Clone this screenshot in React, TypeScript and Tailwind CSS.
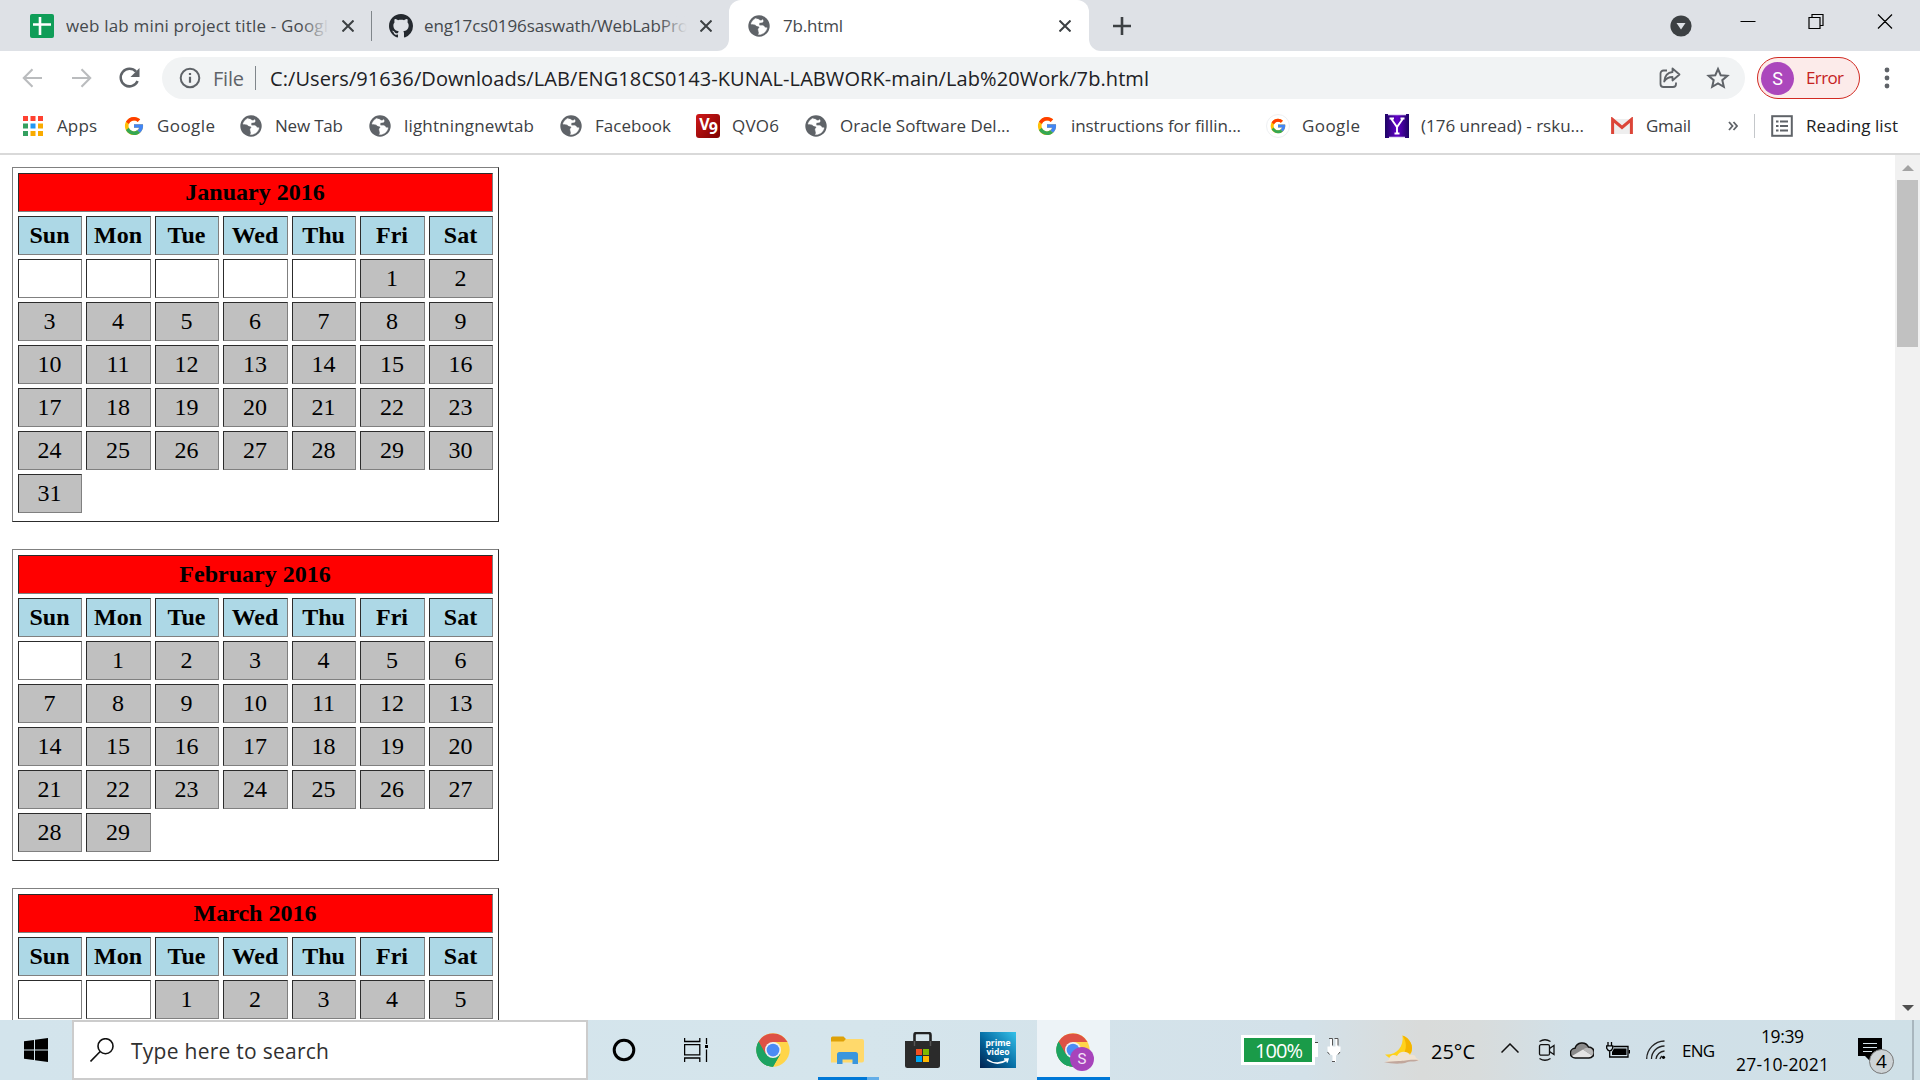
import { useLayoutEffect, useRef, type ReactNode } from "react";

const UI = "font-['Open_Sans','Noto_Sans',sans-serif]";

/** Single line of text whose tracking is adjusted to fill the width of its box. */
function Fit({ className = "", children }: { className?: string; children: string }) {
  const box = useRef<HTMLDivElement>(null);
  const run = useRef<HTMLSpanElement>(null);
  useLayoutEffect(() => {
    const b = box.current;
    const r = run.current;
    if (!b || !r) return;
    r.style.letterSpacing = "0px";
    const natural = r.getBoundingClientRect().width;
    const gap = (b.clientWidth - natural) / Math.max(1, children.length - 1);
    r.style.letterSpacing = `${gap}px`;
  }, [children]);
  return (
    <div ref={box} className={`shrink-0 whitespace-nowrap ${className}`}>
      <span ref={run} className="inline-block">{children}</span>
    </div>
  );
}

function Globe({ className = "" }: { className?: string }) {
  return (
    <svg viewBox="0 0 22 22" className={`h-[22px] w-[22px] shrink-0 ${className}`}>
      <circle cx="11" cy="11" r="10.7" fill="#5f6368" />
      <path
        d="M8.2 3.2C5.6 4.2 3.7 6.3 3 9.1c1.700.2 3.600.5 4.600.8.6.2.5.9 1.200 1.200.9.4 2.300.1 2.500 1.200.1.8-.9 1-1.100 1.800-.2 1.100.6 2.200.7 3.300.1.900-.2 1.600-.6 2.200 4.300.3 8-2.700 8.800-6.800-1.100.1-1.800-.1-2.500-.8-.6-.600-.900-1.300-1.800-1.500-1.200-.3-2.700.3-3.500-.6-.6-.700-.2-1.700.5-2.100 1-.6 2.300 0 3.100-.9.600-.7.2-1.700-.2-2.400-.5.700-1.200 1.100-2.100 1-1-.1-1.400-.8-2.200-1.200-.7-.3-1.600-.3-2.200-.100z"
        fill="#fff"
        stroke="#fff"
        strokeWidth=".4"
      />
    </svg>
  );
}

function GoogleG({ className = "" }: { className?: string }) {
  return (
    <svg viewBox="2 2 44 44" className={`shrink-0 ${className}`}>
      <path fill="#FFC107" d="M43.6 20H42V20H24v8h11.300c-1.650 4.650-6.080 8-11.300 8-6.630 0-12-5.370-12-12s5.370-12 12-12c3.060 0 5.840 1.150 7.960 3.040l5.660-5.660C34.050 6.050 29.270 4 24 4 12.950 4 4 12.950 4 24s8.950 20 20 20 20-8.950 20-20c0-1.340-.14-2.650-.39-4z" />
      <path fill="#FF3D00" d="M6.300 14.700l6.570 4.820C14.650 15.100 18.960 12 24 12c3.060 0 5.840 1.150 7.960 3.040l5.660-5.660C34.050 6.050 29.270 4 24 4 16.320 4 9.660 8.340 6.300 14.700z" />
      <path fill="#34A853" d="M24 44c5.170 0 9.860-1.980 13.400-5.200l-6.190-5.240C29.200 35.100 26.700 36 24 36c-5.200 0-9.620-3.320-11.280-7.950l-6.520 5.020C9.500 39.560 16.230 44 24 44z" />
      <path fill="#4285F4" d="M43.600 20H24v8h11.300a12 12 0 0 1-4.090 5.570l6.190 5.240C36.970 39.200 44 34 44 24c0-1.340-.14-2.650-.4-4z" />
    </svg>
  );
}

function Chrome() {
  return (
    <svg viewBox="0 0 48 48" className="h-[34px] w-[34px] shrink-0">
      <circle cx="24" cy="24" r="23.500" fill="#ffd54a" />
      <path d="M24 24 3.600 12.300A23.500 23.500 0 0 0 24 47.500l10.300-17.700z" fill="#1da362" />
      <path d="M3.600 12.300A23.500 23.500 0 0 1 44.500 12.700H24L13.500 29.500z" fill="#de5145" />
      <path d="M3.600 12.300 13.800 30 24 34.500 34.200 30 24 47.500A23.500 23.500 0 0 1 3.600 12.300z" fill="#1da362" />
      <circle cx="24" cy="24" r="11.300" fill="#f1f1f1" />
      <circle cx="24" cy="24" r="9" fill="#4b8bf5" />
    </svg>
  );
}

function Cross({ className = "" }: { className?: string }) {
  return (
    <svg viewBox="0 0 12 12" className={`h-3 w-3 shrink-0 ${className}`} stroke="#3c4043" strokeWidth="2">
      <path d="M.5.5l11 11M11.500.5l-11 11" />
    </svg>
  );
}

function TabStrip() {
  return (
    <header className="flex h-[51px] shrink-0 items-center bg-[#dee1e6] text-[17px] text-[#45494d]">
      <svg viewBox="0 0 24 24" className="ml-[30px] h-6 w-6 shrink-0">
        <rect width="24" height="24" rx="2" fill="#0f9d58" />
        <path d="M3 10.500h18M10 3v18" stroke="#fff" strokeWidth="2.600" />
      </svg>
      <div className="relative ml-3 w-[263px] shrink-0 overflow-hidden">
        <Fit className="w-[262px]">web lab mini project title - Googl</Fit>
        <div className="absolute inset-y-0 right-0 w-7 bg-linear-to-r from-transparent to-[#dee1e6]" />
      </div>
      <Cross className="ml-[13px]" />
      <div className="ml-[17px] h-[30px] w-px bg-[#80868b]" />
      <svg viewBox="0 0 16 16" className="ml-[17px] h-6 w-6 shrink-0" fill="#24292f">
        <path d="M8 0C3.580 0 0 3.580 0 8c0 3.540 2.290 6.530 5.470 7.590.4.070.55-.17.55-.38 0-.19-.01-.82-.01-1.490-2.010.37-2.530-.49-2.690-.94-.09-.23-.48-.94-.82-1.130-.28-.15-.68-.52-.01-.53.63-.01 1.080.58 1.230.82.72 1.210 1.870.87 2.330.66.07-.52.28-.87.51-1.070-1.780-.2-3.640-.89-3.640-3.950 0-.87.31-1.590.82-2.150-.08-.2-.36-1.020.08-2.120 0 0 .67-.21 2.200.82.64-.18 1.320-.27 2-.27s1.360.09 2 .27c1.530-1.040 2.200-.82 2.200-.82.44 1.100.16 1.920.08 2.120.51.56.82 1.270.82 2.150 0 3.070-1.870 3.750-3.650 3.950.29.25.54.73.54 1.480 0 1.070-.01 1.930-.01 2.200 0 .21.15.46.55.38A8.010 8.010 0 0 0 16 8c0-4.420-3.580-8-8-8z" />
      </svg>
      <div className="relative ml-[11px] w-[263px] shrink-0 overflow-hidden">
        <Fit className="w-[264px]">eng17cs0196saswath/WebLabPro</Fit>
        <div className="absolute inset-y-0 right-0 w-7 bg-linear-to-r from-transparent to-[#dee1e6]" />
      </div>
      <Cross className="ml-[13px]" />
      <div className="ml-[5px] flex h-full w-3 shrink-0 bg-white">
        <div className="h-full w-full rounded-br-xl bg-[#dee1e6]" />
      </div>
      <div className="flex h-full w-[360px] shrink-0 items-center rounded-t-xl bg-white">
        <Globe className="ml-[19px]" />
        <Fit className="ml-[13px] w-[60px]">7b.html</Fit>
        <Cross className="ml-[216px]" />
      </div>
      <div className="flex h-full w-3 shrink-0 bg-white">
        <div className="h-full w-full rounded-bl-xl bg-[#dee1e6]" />
      </div>
      <svg viewBox="0 0 18 18" className="ml-3 h-[18px] w-[18px] shrink-0" stroke="#3c4043" strokeWidth="2.600">
        <path d="M9 0v18M0 9h18" />
      </svg>
      <svg viewBox="0 0 22 22" className="ml-[539px] h-[22px] w-[22px] shrink-0">
        <circle cx="11" cy="11" r="10.600" fill="#3c4043" />
        <path d="M6.500 8h9L11 14.500z" fill="#dee1e6" />
      </svg>
      <svg viewBox="0 0 160 16" className="mb-[9px] ml-[46px] h-4 w-40 shrink-0" fill="none" stroke="#000" strokeWidth="1.200">
        <path d="M2.500 8.500h15M71 4.500h11v11H71zM74 4.500v-3h11v11h-3M140 1.500l14 14M154 1.500l-14 14" />
      </svg>
    </header>
  );
}

function Toolbar() {
  return (
    <div className="flex h-[54px] shrink-0 items-center">
      <svg viewBox="0 0 130 24" className="ml-[20px] h-6 w-[130px] shrink-0" fill="none" strokeWidth="2.100">
        <path d="M22 12H4M12.500 3.200 3.800 12l8.700 8.800" stroke="#babcbe" />
        <path d="M52 12h18M61.500 3.200 70.200 12l-8.700 8.800" stroke="#babcbe" />
        <path d="M116 5.600A8.800 8.800 0 1 0 117.600 15" stroke="#5f6368" strokeWidth="2.500" />
        <path d="M119.500 2v9h-9z" fill="#5f6368" />
      </svg>
      <div className="ml-3 flex h-[42px] w-[1583px] shrink-0 items-center rounded-full bg-[#f1f3f4] text-[20px]">
        <svg viewBox="0 0 22 22" className="ml-[17px] h-[22px] w-[22px] shrink-0" fill="none" stroke="#5f6368" strokeWidth="2">
          <circle cx="11" cy="11" r="9.300" />
          <path d="M11 9.800v6M11 6v2" strokeWidth="2.200" />
        </svg>
        <Fit className="mt-0.5 ml-[12px] w-[31px] text-[#5f6368]">File</Fit>
        <div className="ml-[11px] h-6 w-px bg-[#80868b]" />
        <Fit className="mt-0.5 ml-[14px] w-[879px] text-[#202124]">
          C:/Users/91636/Downloads/LAB/ENG18CS0143-KUNAL-LABWORK-main/Lab%20Work/7b.html
        </Fit>
        <svg viewBox="0 0 22 22" className="ml-[510px] h-[22px] w-[22px] shrink-0" fill="none" stroke="#5f6368" strokeWidth="1.800" strokeLinejoin="round">
          <path d="M8 3.500H4.500a3 3 0 0 0-3 3V17a3 3 0 0 0 3 3H14a3 3 0 0 0 3-3v-1.500" />
          <path d="M13.500 1.500 20.500 7.500l-7 6V10C9.500 10 7 11.500 5.200 14.500 5.700 9.500 8.500 5.500 13.500 5z" />
        </svg>
        <svg viewBox="0 0 24 24" className="ml-[25px] h-6 w-6 shrink-0" fill="none" stroke="#5f6368" strokeWidth="2">
          <path d="M12 3l2.700 6.200 6.700.6-5.100 4.400 1.500 6.600L12 17.300l-5.800 3.500 1.500-6.600-5.100-4.400 6.700-.6z" />
        </svg>
      </div>
      <div className="ml-3 flex h-[42px] w-[103px] shrink-0 items-center rounded-full border-[1.500px] border-[#d12a22] bg-[#fcebea]">
        <div className="ml-[3px] flex h-[33px] w-[33px] items-center justify-center rounded-full bg-[#ab47bc] font-[Roboto,sans-serif] text-[18px] text-white">
          S
        </div>
        <Fit className="ml-[12px] w-[38px] text-[17px] text-[#c5221f]">Error</Fit>
      </div>
      <svg viewBox="0 0 6 22" className="ml-6 h-[22px] w-[6px] shrink-0" fill="#5f6368">
        <circle cx="3" cy="3" r="2.400" />
        <circle cx="3" cy="11" r="2.400" />
        <circle cx="3" cy="19" r="2.400" />
      </svg>
    </div>
  );
}

function Bookmark({ icon, gap, width, label }: { icon: ReactNode; gap: string; width: string; label: string }) {
  return (
    <div className={`flex shrink-0 items-center ${gap}`}>
      {icon}
      <Fit className={width}>{label}</Fit>
    </div>
  );
}

const APP_COLORS = [
  "fill-[#ff4131]", "fill-[#ff4131]", "fill-[#ff4131]",
  "fill-[#34a060]", "fill-[#2196f3]", "fill-[#f9ab00]",
  "fill-[#34a060]", "fill-[#f9ab00]", "fill-[#f9ab00]",
];

function BookmarksBar() {
  return (
    <nav className="flex h-[50px] shrink-0 items-center border-b-2 border-[#d9d9d9] pb-1.5 text-[17px] text-[#3c4043]">
      <Bookmark
        gap="ml-[23px] gap-[14px]" width="w-[40px]" label="Apps"
        icon={
          <svg viewBox="0 0 20 20" className="h-5 w-5">
            {APP_COLORS.map((c, i) => (
              <rect key={i} x={(i % 3) * 7.500} y={Math.floor(i / 3) * 7.500} width="5" height="5" className={c} />
            ))}
          </svg>
        }
      />
      <Bookmark gap="ml-[27px] gap-[13px]" width="w-[58px]" label="Google" icon={<GoogleG className="h-5 w-5" />} />
      <Bookmark gap="ml-[25px] gap-[13px]" width="w-[68px]" label="New Tab" icon={<Globe />} />
      <Bookmark gap="ml-[26px] gap-[13px]" width="w-[130px]" label="lightningnewtab" icon={<Globe />} />
      <Bookmark gap="ml-[26px] gap-[13px]" width="w-[76px]" label="Facebook" icon={<Globe />} />
      <Bookmark
        gap="ml-[25px] gap-3" width="w-[47px]" label="QVO6"
        icon={
          <div className="flex h-6 w-6 items-center justify-center rounded-[3px] bg-linear-to-br from-[#d01818] to-[#7e0303] text-[16px] font-bold tracking-[-1px] text-white">
            <span className="pb-1">V</span>
            <span className="pt-1">9</span>
          </div>
        }
      />
      <Bookmark gap="ml-[26px] gap-[13px]" width="w-[170px]" label="Oracle Software Del..." icon={<Globe />} />
      <Bookmark gap="ml-[27px] gap-[14px]" width="w-[170px]" label="instructions for fillin..." icon={<GoogleG className="h-5 w-5" />} />
      <Bookmark
        gap="ml-[25px] gap-3" width="w-[58px]" label="Google"
        icon={
          <div className="flex h-6 w-6 items-center justify-center rounded-full border border-[#eef0f2]">
            <GoogleG className="h-4 w-4" />
          </div>
        }
      />
      <Bookmark
        gap="ml-[25px] gap-3" width="w-[163px]" label="(176 unread) - rsku..."
        icon={
          <svg viewBox="0 0 24 24" className="h-6 w-6">
            <defs>
              <linearGradient id="violet">
                <stop stopColor="#1c0463" />
                <stop offset=".5" stopColor="#6200c8" />
                <stop offset="1" stopColor="#1c0463" />
              </linearGradient>
            </defs>
            <path d="M0 0h24v24H0z" fill="url(#violet)" />
            <path d="M3 0h18v1.300H3zM4 22.700h16V24H4z" fill="#e6ddf5" />
            <path d="M6 4.500l6 8.500 6-8.500M12 13v7M4.500 4.500H9M15.500 4.500h4M9.500 19.500h5" fill="none" stroke="#fff" strokeWidth="1.900" />
          </svg>
        }
      />
      <Bookmark
        gap="ml-[26px] gap-3" width="w-[45px]" label="Gmail"
        icon={
          <svg viewBox="0 0 24 18" className="h-[18px] w-6">
            <path d="M2 2h20v15H2z" fill="#eee" />
            <path d="M2.600 17V2.500L12 10.500l9.400-8V17" fill="none" stroke="#dc4538" strokeWidth="3" />
          </svg>
        }
      />
      <svg viewBox="0 0 10 10" className="ml-[37px] h-[10px] w-[10px] shrink-0" fill="none" stroke="#5f6368" strokeWidth="1.800">
        <path d="M1 1l3.500 4L1 9M5.500 1 9 5 5.500 9" />
      </svg>
      <div className="ml-4 h-6 w-px shrink-0 bg-[#c4c7ca]" />
      <Bookmark
        gap="ml-4 gap-[13px] text-[#202124]" width="w-[92px]" label="Reading list"
        icon={
          <svg viewBox="0 0 22 22" className="h-[22px] w-[22px]" fill="none" stroke="#5f6368" strokeWidth="2">
            <rect x="1.200" y="1.200" width="19.600" height="19.600" />
            <path d="M5 6.500h2.500M5 11h2.500M5 15.500h2.500M9 6.500h8M9 11h8M9 15.500h8" />
          </svg>
        }
      />
    </nav>
  );
}

const DAYS = ["Sun", "Mon", "Tue", "Wed", "Thu", "Fri", "Sat"];
const CELL = "flex h-[39px] items-center justify-center pr-px border border-t-[#2c2c2c] border-l-[#2c2c2c] border-r-[#808080] border-b-[#808080]";

function Month({ title, blanks, days }: { title: string; blanks: number; days: number }) {
  return (
    <section className="mb-[27px] ml-3 grid w-[487px] shrink-0 grid-cols-[64px_65px_64px_65px_64px_65px_64px] gap-1 border border-t-[#808080] border-r-[#2c2c2c] border-b-[#2c2c2c] border-l-[#808080] px-[5px] pt-[5px] pb-2">
      <h2 className={`${CELL} col-span-7 bg-[#ff0000] font-bold`}>{title}</h2>
      {DAYS.map((d) => (
        <div key={d} className={`${CELL} bg-[#add8e6] font-bold`}>{d}</div>
      ))}
      {Array.from({ length: blanks }, (_, i) => (
        <div key={`b${i}`} className={CELL} />
      ))}
      {Array.from({ length: days }, (_, i) => (
        <div key={i} className={`${CELL} bg-[#c0c0c0]`}>{i + 1}</div>
      ))}
    </section>
  );
}

function Page() {
  return (
    <main className="flex h-[865px] shrink-0 overflow-hidden">
      <div className="flex flex-1 flex-col overflow-hidden pt-3 font-['Liberation_Serif',serif] text-[24px] leading-[27px] text-black">
        <Month title="January 2016" blanks={5} days={31} />
        <Month title="February 2016" blanks={1} days={29} />
        <Month title="March 2016" blanks={2} days={5} />
      </div>
      <div className="flex w-[25px] flex-col items-center justify-between bg-[#f1f1f1]">
        <div className="flex w-full flex-col items-center">
          <svg viewBox="0 0 12 6" className="mt-[10px] h-[6px] w-3" fill="#a3a3a3"><path d="M0 6 6 0l6 6z" /></svg>
          <div className="mt-[9px] h-[167px] w-[21px] bg-[#c1c1c1]" />
        </div>
        <svg viewBox="0 0 12 6" className="mb-[9px] h-[6px] w-3" fill="#505050"><path d="M0 0h12L6 6z" /></svg>
      </div>
    </main>
  );
}

function Taskbar() {
  return (
    <footer className="flex h-[60px] shrink-0 items-center bg-[linear-gradient(to_right,#d3e4ec_0%,#d5e5ec_45%,#d3e1e9_68%,#d9dbda_74%,#d8dcdc_77%,#d1e0e8_82%,#cfe0e7_100%)] text-black">
      <svg viewBox="0 0 24 24" className="ml-6 h-6 w-6 shrink-0">
        <path d="M0 3.300 10 2v9.500H0zM11 1.800 24 0v11.500H11zM0 12.500h10V22L0 20.700zM11 12.500h13V24l-13-1.800z" />
      </svg>
      <div className="ml-6 flex h-[60px] w-[516px] shrink-0 items-center border-2 border-[#ccc] bg-white">
        <svg viewBox="0 0 24 24" className="ml-4 h-6 w-6 shrink-0" fill="none" stroke="#111" strokeWidth="1.600">
          <circle cx="15.500" cy="8.200" r="7.500" />
          <path d="M10.200 13.500.5 23.500" />
        </svg>
        <Fit className="mt-1 ml-[17px] w-[198px] text-[21px] text-[#303030]">Type here to search</Fit>
      </div>
      <svg viewBox="0 0 24 24" className="ml-6 h-6 w-6 shrink-0" fill="none" stroke="#000" strokeWidth="3">
        <circle cx="12" cy="12" r="9.800" />
      </svg>
      <svg viewBox="0 0 24 24" className="ml-12 h-6 w-6 shrink-0" fill="none" stroke="#000" strokeWidth="1.300">
        <path d="M.6 0v3.500h15.200V0M.6 6.600h15.200v10.300H.6zM.6 24v-4h15.200v4M22.500 0v6M22.500 11.500V24" />
        <path d="M21 7h3v3h-3z" fill="#000" stroke="none" />
      </svg>
      <div className="ml-12 flex shrink-0"><Chrome /></div>
      <div className="ml-[28px] flex h-full w-[61px] shrink-0 flex-col justify-between">
        <svg viewBox="0 0 33 28" className="mt-4 ml-[13px] h-7 w-[33px]">
          <path d="M0 2a1.500 1.500 0 0 1 1.500-1.500h11L15 3l-1 3H0z" fill="#dea107" />
          <path d="M0 5.500h12.500L15 3h16a2 2 0 0 1 2 2v19.500a2 2 0 0 1-2 2H0z" fill="#ffd96b" />
          <path d="M6 28V18.500A2.500 2.500 0 0 1 8.500 16h16a2.500 2.500 0 0 1 2.500 2.500V28h-5.500v-4.500h-10V28z" fill="#3a96dd" />
        </svg>
        <div className="flex h-[3px]">
          <div className="w-[49px] bg-[#0078d7]" />
          <div className="w-3 bg-[#64aee8]" />
        </div>
      </div>
      <svg viewBox="0 0 35 36" className="ml-[26px] h-9 w-[35px] shrink-0">
        <path d="M9.500 9V3q0-2 2-2h12q2 0 2 2v6" fill="none" stroke="#222" strokeWidth="2.600" />
        <path d="M0 9h35v24.500a2.500 2.500 0 0 1-2.500 2.500h-30A2.500 2.500 0 0 1 0 33.500z" fill="#2b2b2b" />
        <path d="M9.500 9v5M25.500 9v5" stroke="#555" strokeWidth="1.400" />
        <path d="M11 17h6v6h-6z" fill="#f25022" />
        <path d="M18 17h6v6h-6z" fill="#7fba00" />
        <path d="M11 24h6v6h-6z" fill="#00a4ef" />
        <path d="M18 24h6v6h-6z" fill="#ffb900" />
      </svg>
      <div className="ml-[40px] flex h-9 w-9 shrink-0 flex-col items-center bg-linear-to-tr from-[#02214f] via-[#0872a8] to-[#35c2ea] pt-[6px] text-[8.500px] leading-[9px] font-bold text-white">
        <span>prime</span>
        <span>video</span>
        <svg viewBox="0 0 24 8" className="mt-[2px] h-[8px] w-6" fill="none" stroke="#fff" strokeWidth="1.500">
          <path d="M1 1.500q10 7 20 .500M18 1h4l-1 3.500" />
        </svg>
      </div>
      <div className="relative ml-[21px] flex h-full w-[73px] shrink-0 items-center border-b-[3px] border-[#0078d7] bg-[#edf3f7] pt-[3px] pl-[19px]">
        <Chrome />
        <div className="absolute top-[27px] left-[33px] flex h-6 w-6 items-center justify-center rounded-full bg-[#a743bb] font-[Roboto,sans-serif] text-[15px] text-[#f3e3f6]">
          S
        </div>
      </div>
      <div className="ml-[131px] flex h-[30px] w-[74px] shrink-0 items-center justify-center border-[3.500px] border-white bg-[#1a9b49]">
        <Fit className="mt-0.5 ml-0.5 w-[48px] text-[20px] text-white">100%</Fit>
      </div>
      <svg viewBox="0 0 26 26" className="h-[26px] w-[26px] shrink-0">
        <path d="M0 6h3v14H0z" fill="#fff" />
        <path d="M0 5.500h3" stroke="#444" />
        <path d="M12.500 9.500h13v3c0 3-2 5-4.500 6V25h-3.500v-6.500c-3-1-5-3-5-6zM15 2h2.500v8H15zM20.500 2H23v8h-2.500z" fill="#fff" />
        <path d="M14 1.500h3.500v7M19.500 1.500H23v7M12.500 15l2 2.500M25 15l-2 2.500M17 24.500h3" fill="none" stroke="#555" />
      </svg>
      <svg viewBox="0 0 35 30" className="ml-[43px] h-[30px] w-[35px] shrink-0">
        <path d="M18.500.5c8 3 11.500 11 8.500 17.500-3 6.500-12 9-20.500 6L1 19.500c11 1 19-7 17.500-19z" fill="#ffd21c" />
        <path d="M18.500.5c8 3 11.500 11 8.500 17.500l-8 2c4-6 4-13-.5-19.500z" fill="#f4b400" />
        <path d="M5 25c0-5 5-6 8-4 2-5 10-6 13-1 2-1 6 0 6 3 2 1 3 2 3 3H17c-4 2-9 3-16 1z" fill="#efe3d3" />
        <path d="M0 27c6 0 9-1 15-1s9-2 20-1c-5 3-9 0-14 3-5 1-14 1-21-1z" fill="#c1a79c" />
      </svg>
      <Fit className="mt-1 ml-[12px] w-[44px] text-[20px]">25°C</Fit>
      <svg viewBox="0 0 18 10" className="mb-1 ml-[26px] h-[10px] w-[18px] shrink-0" fill="none" stroke="#111" strokeWidth="1.500">
        <path d="M.5 9.500 9 1l8.500 8.500" />
      </svg>
      <svg viewBox="0 0 18 22" className="ml-[19px] h-[22px] w-[18px] shrink-0" fill="none" stroke="#111" strokeWidth="1.300">
        <rect x="1.500" y="5.700" width="10" height="10.500" rx="1.500" />
        <path d="M11.500 9.500 16 6.500v9l-4.500-3M1.500 2.500q5.500-3.500 11 0M1.500 19.500q5.500 3.500 11 0" />
      </svg>
      <svg viewBox="0 0 24 17" className="ml-[14px] h-[17px] w-6 shrink-0">
        <path d="M5.500 16A4.800 4.800 0 0 1 5 6.300 7.300 7.300 0 0 1 18.500 5 5.500 5.500 0 0 1 19 16z" fill="#8a8a8a" />
        <path d="M2 14 13 7.500l9 6q-1 2.500-4 2.500H5.500Q3 16 2 14z" fill="#e4e4e4" />
        <path d="M13 7.500q4-3.500 9 0 2 4 0 6z" fill="#b8b8b8" />
        <path d="M5.500 16A4.800 4.800 0 0 1 5 6.300 7.300 7.300 0 0 1 18.500 5 5.500 5.500 0 0 1 19 16z" fill="none" stroke="#111" strokeWidth="1.500" />
      </svg>
      <svg viewBox="0 0 24 17" className="ml-3 h-[17px] w-6 shrink-0" fill="none" stroke="#000" strokeWidth="1.300">
        <path d="M7.500 4.500H22v10.500H5M23.500 8v3.500M2 0v3.500M5.500 0v3.500M.700 3.800h6v2.500q-1 2.500-3 2.500-2 0-3-2.500zM3.700 8.800V15H6" />
        <path d="M8 6.500h12.500v6.500H6v-3z" fill="#000" stroke="none" />
      </svg>
      <svg viewBox="0 0 20 20" className="ml-4 h-5 w-5 shrink-0" fill="none" stroke="#222" strokeWidth="1.300">
        <path d="M.7 19A18 18 0 0 1 18.500 1M5.500 19A13 13 0 0 1 18.500 6M10 19a9 9 0 0 1 8.500-8M14 19a5 5 0 0 1 2-3" />
        <circle cx="17.500" cy="17.300" r="1.600" fill="#000" stroke="none" />
      </svg>
      <Fit className="mt-0.5 ml-[16px] w-[33px] text-[17px]">ENG</Fit>
      <div className="ml-[21px] flex w-[93px] shrink-0 flex-col items-center text-[17.500px] leading-7">
        <Fit className="w-[43px]">19:39</Fit>
        <Fit className="w-[93px]">27-10-2021</Fit>
      </div>
      <div className="relative ml-[29px] h-6 w-6 shrink-0">
        <svg viewBox="0 0 24 24" className="h-6 w-6">
          <path d="M0 0h24v18H13v6l-6-6H0z" />
          <path d="M5 5.500h14M5 9.500h14M5 13.500h9" stroke="#d5e3ea" strokeWidth="1.200" />
        </svg>
        <div className="absolute top-[11px] left-[11px] flex h-[25px] w-[25px] items-center justify-center rounded-full border border-[#777] bg-[#cdd3d6] text-[19px] font-medium">
          4
        </div>
      </div>
      <div className="ml-[30px] h-full w-[2px] shrink-0 bg-[#a8b6be]" />
    </footer>
  );
}

export default function App() {
  return (
    <div className={`flex h-[1080px] w-[1920px] flex-col overflow-hidden bg-white ${UI}`}>
      <TabStrip />
      <Toolbar />
      <BookmarksBar />
      <Page />
      <Taskbar />
    </div>
  );
}
